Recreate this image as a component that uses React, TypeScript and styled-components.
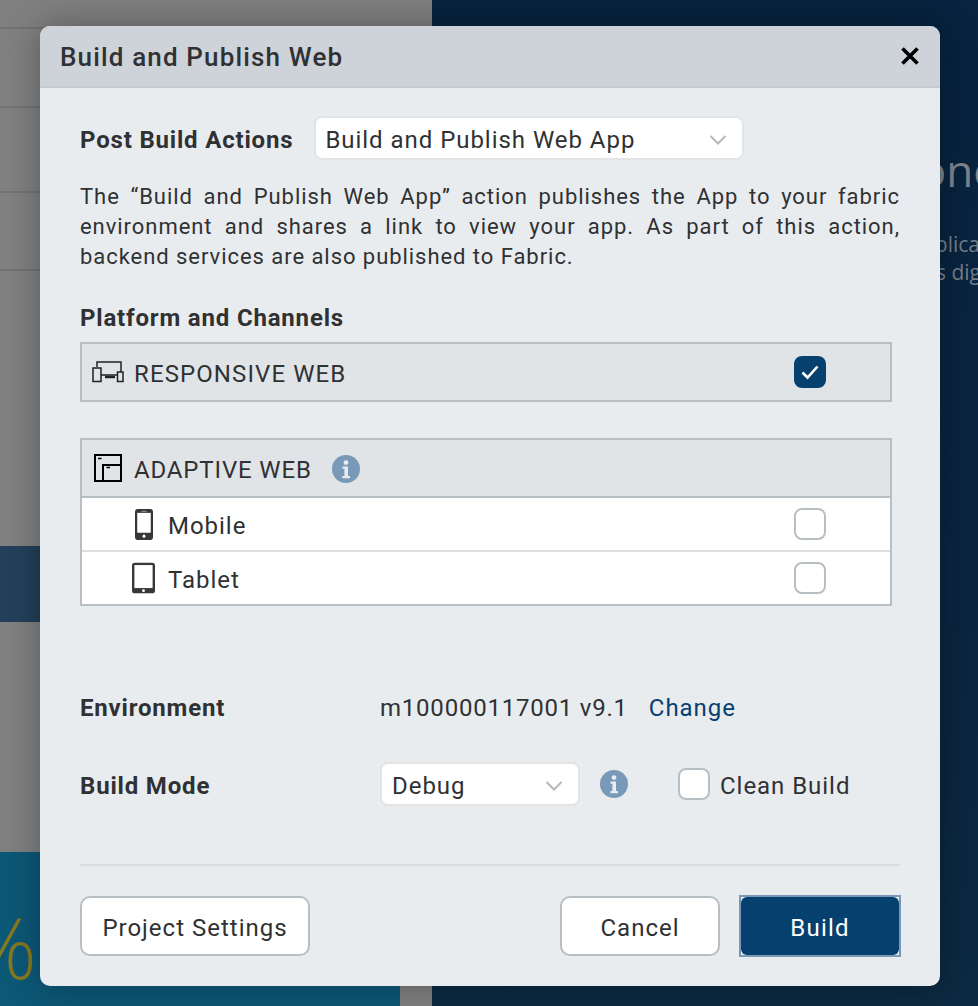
import React from "react";
import styled, { createGlobalStyle } from "styled-components";

const Global = createGlobalStyle`
  html, body { margin: 0; padding: 0; background: #808080; }
  * { box-sizing: border-box; }
  body { font-family: Roboto, "Liberation Sans", sans-serif; color: #2f3133; }
`;

const Page = styled.div`
  position: relative;
  width: 978px;
  height: 1006px;
  overflow: hidden;
  display: grid;
  grid-template-columns: 432px 546px;
`;

const LeftColumn = styled.div`
  display: flex;
  flex-direction: column;
  background: #808080;
`;

const GhostRow = styled.div<{ $h: number }>`
  height: ${(p) => p.$h}px;
  flex: none;
  border-bottom: 2px solid #737373;
`;

const Band = styled.div`
  height: 76px;
  flex: none;
  background: #24405a;
`;

const GreyFill = styled.div<{ $h: number }>`
  height: ${(p) => p.$h}px;
  flex: none;
`;

const Promo = styled.div`
  width: 400px;
  height: 154px;
  flex: none;
  background: #0c5877;
  color: #86791f;
  font: 300 84px/1 "Open Sans", sans-serif;
  padding: 53px 0 0 0;
  overflow: hidden;
  white-space: nowrap;
  text-indent: -31px;
`;

const RightColumn = styled.div`
  background: linear-gradient(180deg, #07233f 0%, #0a2540 60%, #0c2a42 100%);
  color: #7d858d;
  font-family: "Open Sans", sans-serif;
  padding: 140px 0 0 0;
  white-space: nowrap;
  overflow: hidden;
`;

const GhostHeading = styled.div`
  font-size: 44px;
  line-height: 60px;
  text-align: right;
  width: 566px;
`;

const GhostText = styled.div`
  font-size: 21px;
  line-height: 28px;
  text-align: right;
  margin-top: 30px;
  color: #747f8a;
`;

const GhostLine = styled.div<{ $w: number }>`
  width: ${(p) => p.$w}px;
  text-align: right;
`;

const Modal = styled.div`
  position: absolute;
  left: 40px;
  top: 26px;
  width: 900px;
  height: 960px;
  background: #e9ecef;
  border-radius: 10px;
  box-shadow: 0 0 36px rgba(0, 0, 0, 0.32);
  display: flex;
  flex-direction: column;
  overflow: hidden;
`;

const Header = styled.div`
  flex: none;
  height: 62px;
  background: #ced2d9;
  border-bottom: 2px solid #c6cad0;
  display: flex;
  align-items: center;
  justify-content: space-between;
  padding: 0 20px;
`;

const Title = styled.div`
  font-size: 26px;
  font-weight: 500;
  letter-spacing: 1.15px;
  padding-top: 2px;
  color: #2f3133;
`;

const CloseIcon = styled.svg`
  width: 20px;
  height: 20px;
  display: block;
`;

const Body = styled.div`
  flex: 1;
  padding: 28px 40px 30px;
  display: flex;
  flex-direction: column;
`;

const ActionRow = styled.div`
  display: flex;
  align-items: center;
  gap: 21px;
`;

const Label = styled.div<{ $pt?: number }>`
  font-size: 24px;
  font-weight: 700;
  letter-spacing: 0.82px;
  line-height: 30px;
  padding-top: ${(p) => p.$pt ?? 0}px;
  color: #2f3133;
`;

const Select = styled.div<{ $w: number; $pl: number; $pt: number }>`
  width: ${(p) => p.$w}px;
  height: 44px;
  flex: none;
  background: #fff;
  border: 2px solid #e2e4e6;
  border-radius: 8px;
  display: flex;
  align-items: center;
  justify-content: space-between;
  padding: ${(p) => p.$pt}px 15px 0 ${(p) => p.$pl}px;
  font-size: 24px;
  letter-spacing: 0.96px;
`;

const Chevron = styled.svg`
  width: 18px;
  height: 12px;
  display: block;
`;

const Paragraph = styled.p`
  margin: 22px 0 0;
  font-size: 22px;
  line-height: 30px;
  letter-spacing: 0.95px;
  text-align: justify;
  color: #2f3133;
`;

const SectionLabel = styled(Label)`
  margin-top: 27px;
`;

const Table = styled.div<{ $mt: number }>`
  width: 812px;
  margin-top: ${(p) => p.$mt}px;
  border: 2px solid #b8bfc3;
  display: flex;
  flex-direction: column;
`;

const TableHead = styled.div<{ $h: number; $pt?: number }>`
  height: ${(p) => p.$h}px;
  background: #e1e4e7;
  display: flex;
  align-items: center;
  padding: ${(p) => p.$pt ?? 0}px 0 0 10px;
`;

const HeadLabel = styled.div<{ $ls: number; $pt: number }>`
  font-size: 24px;
  letter-spacing: ${(p) => p.$ls}px;
  margin-left: 10px;
  padding-top: ${(p) => p.$pt}px;
`;

const OptionRow = styled.div<{ $first?: boolean; $h: number; $pl: number }>`
  height: ${(p) => p.$h}px;
  background: #fff;
  display: flex;
  align-items: center;
  padding-left: ${(p) => p.$pl}px;
  border-top: 2px solid ${(p) => (p.$first ? "#b8bfc3" : "#e0e0e0")};
`;

const OptionLabel = styled.div<{ $ml: number; $pt: number }>`
  font-size: 24px;
  letter-spacing: 0.98px;
  margin-left: ${(p) => p.$ml}px;
  padding-top: ${(p) => p.$pt}px;
`;

const Spacer = styled.div`
  flex: 1;
`;

const Check = styled.div<{ $on?: boolean; $mr?: number; $ml?: number }>`
  width: 32px;
  height: 32px;
  flex: none;
  border-radius: 8px;
  margin-right: ${(p) => p.$mr ?? 64}px;
  margin-left: ${(p) => p.$ml ?? 0}px;
  background: ${(p) => (p.$on ? "#05406f" : "#fff")};
  border: ${(p) => (p.$on ? "none" : "2px solid #b8bfc3")};
  display: flex;
  align-items: center;
  justify-content: center;
`;

const EnvRow = styled.div`
  margin-top: 87px;
  display: grid;
  grid-template-columns: 300px auto auto 1fr;
  align-items: center;
  font-size: 24px;
`;

const Value = styled.div`
  letter-spacing: 0.78px;
`;

const ChangeLink = styled.a`
  color: #05406f;
  letter-spacing: 0.95px;
  margin-left: 21px;
`;

const ModeRow = styled.div`
  margin-top: 39px;
  display: flex;
  align-items: center;
  font-size: 24px;
`;

const ModeLabel = styled(Label)`
  width: 300px;
`;

const InfoIcon = styled.svg<{ $ml: number }>`
  width: 28px;
  height: 28px;
  display: block;
  margin-left: ${(p) => p.$ml}px;
  flex: none;
`;

const CleanLabel = styled.div`
  letter-spacing: 0.96px;
  margin-left: 10px;
  padding-top: 4px;
`;

const Divider = styled.div`
  height: 2px;
  background: #d8dcdf;
  margin-top: 58px;
`;

const Footer = styled.div`
  margin-top: 29px;
  display: flex;
  align-items: center;
`;

const Button = styled.button<{ $w: number }>`
  width: ${(p) => p.$w}px;
  height: 60px;
  background: #fff;
  border: 2px solid #b8bfc3;
  border-radius: 10px;
  font: 400 24px Roboto, sans-serif;
  letter-spacing: 1px;
  color: #2f3133;
  padding: 4px 0 0;
`;

const BuildFrame = styled.div`
  width: 162px;
  height: 62px;
  margin: 0 -1px 0 19px;
  border: 2px solid #7b98b6;
  display: flex;
`;

const BuildButton = styled.button`
  flex: 1;
  background: #05406f;
  border: none;
  border-radius: 6px;
  font: 400 24px Roboto, sans-serif;
  letter-spacing: 1.2px;
  color: #fff;
  padding: 4px 0 0;
`;

const Info = ({ ml }: { ml: number }) => (
  <InfoIcon $ml={ml} viewBox="0 0 28 28">
    <circle cx="14" cy="14" r="14" fill="#7899b8" />
    <circle cx="14" cy="7.6" r="2.4" fill="#e9ecef" />
    <path d="M10.5 11.5h5.5v9.5h2v2.2h-7.6V21h2v-7.3h-1.9z" fill="#e9ecef" />
  </InfoIcon>
);

const Arrow = () => (
  <Chevron viewBox="0 0 18 12">
    <path d="M1.5 2l7.5 7.5L16.5 2" fill="none" stroke="#b5b8bb" strokeWidth="2" />
  </Chevron>
);

export default function App() {
  return (
    <Page>
      <Global />
      <LeftColumn>
        <GhostRow $h={29} />
        <GhostRow $h={79} />
        <GhostRow $h={85} />
        <GhostRow $h={78} />
        <GreyFill $h={275} />
        <Band />
        <GreyFill $h={230} />
        <Promo>%</Promo>
      </LeftColumn>
      <RightColumn>
        <GhostHeading>Composable one</GhostHeading>
        <GhostText>
          <GhostLine $w={548}>Build applica</GhostLine>
          <GhostLine $w={549}>across dig</GhostLine>
        </GhostText>
      </RightColumn>
      <Modal>
        <Header>
          <Title>Build and Publish Web</Title>
          <CloseIcon viewBox="0 0 20 20">
            <path d="M2.5 2.5l15 15M17.5 2.5l-15 15" stroke="#000" strokeWidth="3.6" fill="none" />
          </CloseIcon>
        </Header>
        <Body>
          <ActionRow>
            <Label $pt={4}>Post Build Actions</Label>
            <Select $w={430} $pl={9} $pt={4}>
              <span>Build and Publish Web App</span>
              <Arrow />
            </Select>
          </ActionRow>
          <Paragraph>
            The “Build and Publish Web App” action publishes the App to your fabric environment and
            shares a link to view your app. As part of this action, backend services are also
            published to Fabric.
          </Paragraph>
          <SectionLabel $pt={4}>Platform and Channels</SectionLabel>
          <Table $mt={9}>
            <TableHead $h={56}>
              <svg width="32" height="24" viewBox="0 0 32 24" fill="none" stroke="#1f2123" strokeWidth="1.5">
                <path d="M5 7V2h24v10" />
                <path d="M9 15h16" />
                <path d="M13 17h10" strokeWidth="2.5" />
                <rect x="1" y="8" width="8" height="13.5" />
                <rect x="25.5" y="12" width="5.5" height="9.5" />
              </svg>
              <HeadLabel $ls={1.1} $pt={4}>RESPONSIVE WEB</HeadLabel>
              <Spacer />
              <Check $on>
                <svg width="20" height="16" viewBox="0 0 20 16">
                  <path d="M2.5 8.5l5 5L17.5 2.5" fill="none" stroke="#fff" strokeWidth="2.6" />
                </svg>
              </Check>
            </TableHead>
          </Table>
          <Table $mt={36}>
            <TableHead $h={56} $pt={1}>
              <svg width="30" height="30" viewBox="0 0 30 30" fill="none" stroke="#000" strokeWidth="2" style={{ marginLeft: 2 }}>
                <rect x="1" y="1" width="26" height="26" />
                <path d="M9 27V11h18" />
                <path d="M4 4.5h3.5M12.5 13.5h3.5" strokeWidth="1.5" />
              </svg>
              <HeadLabel $ls={0.85} $pt={2}>ADAPTIVE WEB</HeadLabel>
              <Info ml={20} />
            </TableHead>
            <OptionRow $first $h={54} $pl={53}>
              <svg width="18" height="31" viewBox="0 0 20 32" preserveAspectRatio="none">
                <rect x="0" y="0" width="20" height="32" rx="3" fill="#36383a" />
                <rect x="2.5" y="4" width="15" height="20.5" fill="#fff" />
                <rect x="7" y="1.8" width="6" height="1.2" fill="#8c8e90" />
                <circle cx="10" cy="28" r="1.6" fill="#fff" />
              </svg>
              <OptionLabel $ml={15} $pt={3}>Mobile</OptionLabel>
              <Spacer />
              <Check />
            </OptionRow>
            <OptionRow $h={54} $pl={50}>
              <svg width="23" height="32" viewBox="0 0 24 32">
                <rect x="0" y="0" width="24" height="32" rx="3" fill="#36383a" />
                <rect x="2.5" y="2.5" width="19" height="24" fill="#fff" />
                <circle cx="12" cy="29.2" r="1.5" fill="#fff" />
              </svg>
              <OptionLabel $ml={13} $pt={4}>Tablet</OptionLabel>
              <Spacer />
              <Check />
            </OptionRow>
          </Table>
          <EnvRow>
            <Label>Environment</Label>
            <Value>m100000117001 v9.1</Value>
            <ChangeLink>Change</ChangeLink>
          </EnvRow>
          <ModeRow>
            <ModeLabel $pt={4}>Build Mode</ModeLabel>
            <Select $w={200} $pl={10} $pt={4}>
              <span>Debug</span>
              <Arrow />
            </Select>
            <Info ml={20} />
            <Check $mr={0} $ml={50} />
            <CleanLabel>Clean Build</CleanLabel>
          </ModeRow>
          <Divider />
          <Footer>
            <Button $w={230}>Project Settings</Button>
            <Spacer />
            <Button $w={160}>Cancel</Button>
            <BuildFrame>
              <BuildButton>Build</BuildButton>
            </BuildFrame>
          </Footer>
        </Body>
      </Modal>
    </Page>
  );
}
